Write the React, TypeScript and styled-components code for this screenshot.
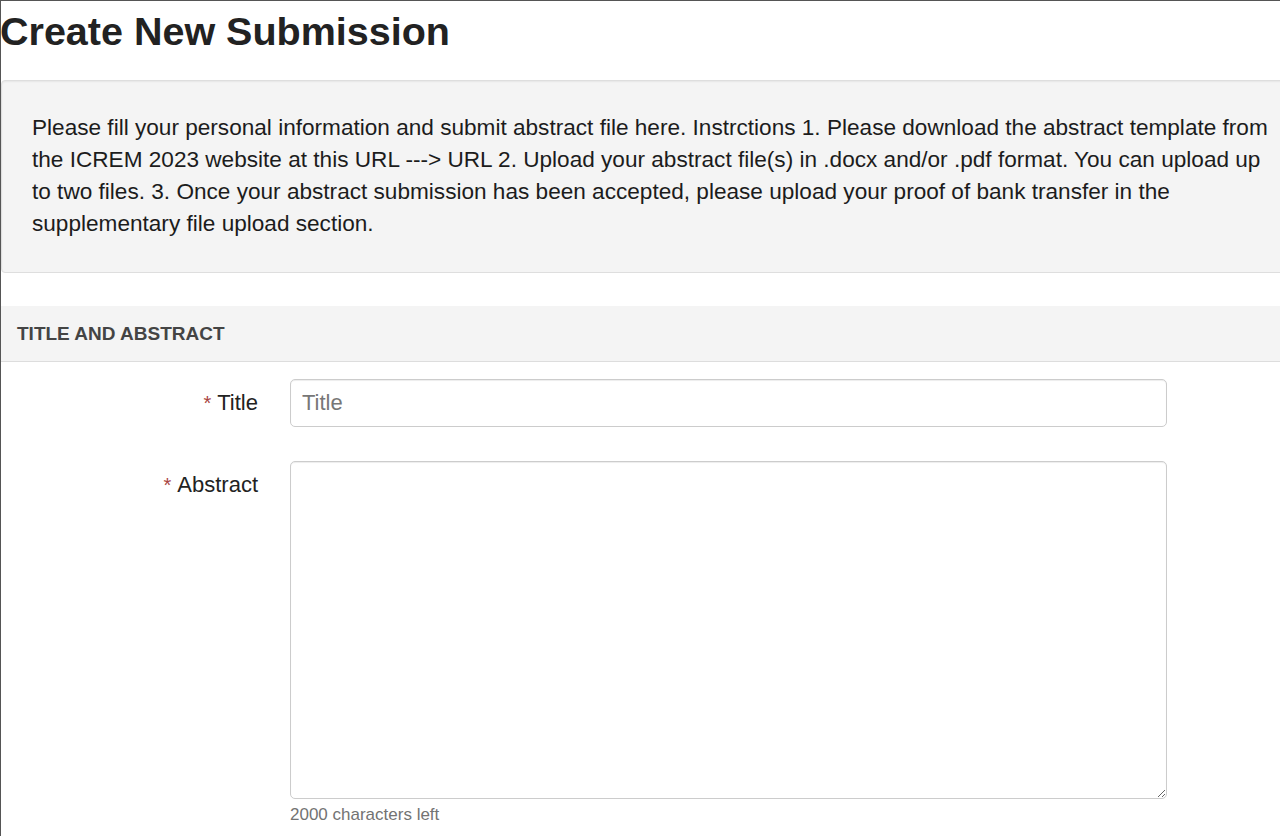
import styled, { createGlobalStyle } from "styled-components";

const GlobalStyle = createGlobalStyle`
  html, body {
    margin: 0;
    padding: 0;
    background: #fff;
    overflow: hidden;
  }
  body {
    font-family: "Liberation Sans", Arial, sans-serif;
    color: #222;
  }
`

const Frame = styled.div`
  width: 1330px;
  min-height: 836px;
  border-top: 1px solid #555;
  border-left: 1px solid #555;
  box-sizing: border-box;
`

const PageTitle = styled.h1`
  margin: 9px 0 27px -1px;
  font-size: 39.5px;
  line-height: 43px;
  font-weight: bold;
  color: #222;
`

const Well = styled.div`
  width: 1306px;
  box-sizing: border-box;
  padding: 31px 30px 32px;
  background: #f4f4f4;
  border: 1px solid #dedede;
  border-radius: 4px;
  box-shadow: inset 0 1px 2px rgba(0, 0, 0, 0.06);
  font-size: 22.6px;
  line-height: 32px;
  color: #1c1c1c;
`

const SectionHeader = styled.div`
  margin-top: 33px;
  height: 55px;
  display: flex;
  align-items: center;
  padding-left: 16px;
  background: #f4f4f4;
  border-bottom: 1px solid #dddddd;
  font-size: 19px;
  font-weight: bold;
  text-transform: uppercase;
  color: #444;
`

const Form = styled.div`
  display: flex;
  flex-direction: column;
  gap: 34px;
  padding-top: 17px;
`

const Row = styled.div`
  display: grid;
  grid-template-columns: 257px 877px;
  column-gap: 32px;
  align-items: start;
`

const Label = styled.label`
  text-align: right;
  font-size: 22px;
  line-height: 48px;
  color: #222;
`

const Required = styled.span`
  color: #a94442;
  font-size: 20px;
  margin-right: 6px;
`

const Field = styled.div`
  display: flex;
  flex-direction: column;
`

const inputBase = `
  width: 100%;
  box-sizing: border-box;
  border: 1px solid #cccccc;
  border-radius: 5px;
  box-shadow: inset 0 1px 1px rgba(0, 0, 0, 0.075);
  font-family: "Liberation Sans", Arial, sans-serif;
  font-size: 22px;
  color: #333;
  background: #fff;
  outline: none;
  &::placeholder {
    color: #777;
  }
`

const TextInput = styled.input`
  ${inputBase}
  height: 48px;
  padding: 0 11px;
`

const TextArea = styled.textarea<{ $height: number }>`
  ${inputBase}
  height: ${(p) => p.$height}px;
  padding: 10px 11px;
  resize: vertical;
  display: block;
`

const HelpText = styled.div`
  margin-top: 6px;
  font-size: 17px;
  line-height: 20px;
  color: #737373;
`

export default function App() {
  return (
    <>
      <GlobalStyle />
      <Frame>
        <PageTitle>Create New Submission</PageTitle>
        <Well>
          Please fill your personal information and submit abstract file here. Instrctions 1.
          Please download the abstract template from the ICREM 2023 website at this URL ---&gt; URL
          2. Upload your abstract file(s) in .docx and/or .pdf format. You can upload up to two
          files. 3. Once your abstract submission has been accepted, please upload your proof of
          bank transfer in the supplementary file upload section.
        </Well>
        <SectionHeader>Title and Abstract</SectionHeader>
        <Form>
          <Row>
            <Label>
              <Required>*</Required>Title
            </Label>
            <Field>
              <TextInput placeholder="Title" />
            </Field>
          </Row>
          <Row>
            <Label>
              <Required>*</Required>Abstract
            </Label>
            <Field>
              <TextArea $height={338} />
              <HelpText>2000 characters left</HelpText>
            </Field>
          </Row>
        </Form>
      </Frame>
    </>
  );
}
